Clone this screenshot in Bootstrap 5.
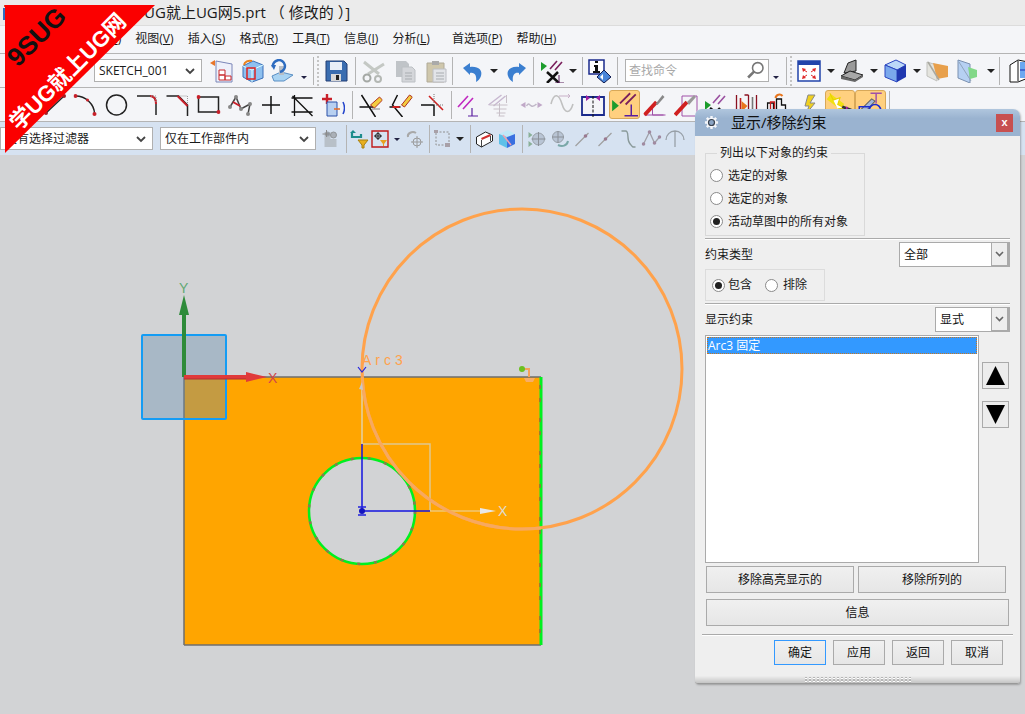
<!DOCTYPE html>
<html lang="zh-CN">
<head>
<meta charset="UTF-8">
<title>NX 草图 - 显示/移除约束</title>
<link href="https://cdn.jsdelivr.net/npm/bootstrap@5.3.3/dist/css/bootstrap.min.css" rel="stylesheet">
<style>
body { font-family: "Open Sans", "Noto Sans CJK SC", sans-serif; font-size: 12px; color: #1a1a1a; background: #d2d3d5; }
.app-shell { width: 1025px; height: 714px; overflow: hidden; position: relative; }
.title-bar { height: 26px; background: #ebebeb; border-bottom: 1px solid #dcdcdc; font-size: 15px; line-height: 25px; white-space: nowrap; }
.menu-bar { height: 27px; background: #f4f5f8; padding-left: 32px; line-height: 26px; white-space: nowrap; }
.menu-bar span { margin-right: 11px; }
.menu-bar span.wide { margin-left: 8px; }
.tool-row { height: 34px; background: #f4f5f8; border-top: 1px solid #b4b4b4; white-space: nowrap; }
.tool-row.tinted { background: #d6e2f1; }
.tool-row > svg { flex: none; }
.pad-sketch { padding-left: 94px; }
.pad-curves { padding-left: 40px; }
.tsep { flex: none; width: 1px; margin: 2px 3px; height: 28px; background: #b4b4b4; }
.tgrip { flex: none; width: 3px; height: 30px; border-left: 2px dotted #c4c4c4; }
.tactive { flex: none; background: #ffd07f; border: 1px solid #d8a858; border-radius: 3px; height: 29px; }
.tsel.form-select { flex: none; height: 23px; min-height: 0; padding: 0 0 0 4px; font-size: 12px; line-height: 21px; border: 1px solid #b0b0b0; border-radius: 0; color: #1a1a1a; background-size: 12px 12px; background-position: right 5px center; background-image: url("data:image/svg+xml,%3csvg xmlns='http://www.w3.org/2000/svg' viewBox='0 0 12 12'%3e%3cpath d='M2 4l4 4 4-4' fill='none' stroke='%23444' stroke-width='1.8'/%3e%3c/svg%3e"); box-shadow: none; }
.sel-sketch { width: 108px; }
.sel-filter { width: 153px; }
.sel-scope { width: 156px; margin-left: 7px; }
.find-box { flex: none; width: 144px; height: 23px; margin-left: 4px; border: 1px solid #b0b0b0; background: #fff; color: #a8a8a8; padding-left: 3px; line-height: 21px; }
.viewport { flex: 1 1 auto; background: #d2d3d5; }
.viewport svg { display: block; }
.corner-flag { position: absolute; left: 0; top: 0; }
.dlg-win { position: absolute; left: 695px; top: 109px; width: 325px; background: #efefef; border-radius: 7px 7px 3px 3px; box-shadow: 1px 1px 2px rgba(0,0,0,.25); }
.dlg-head { height: 27px; border-radius: 7px 7px 0 0; background: linear-gradient(#b0c6de, #9ab3d0 35%); font-size: 15px; color: #111; padding-left: 9px; }
.dlg-close { width: 17px; height: 18px; margin-right: 7px; background: #c75050; color: #fff; font: bold 11px/17px "Liberation Sans", sans-serif; text-align: center; }
.dlg-body { padding: 9px 10px 11px; }
.dlg-group { width: 160px; border: 1px solid #d9d9d9; padding: 3px 0 2px 4px; }
.dlg-group legend { float: none; width: auto; font-size: 12px; line-height: 16px; margin: 0 0 0 7px; padding: 0 3px; }
.radio-row { height: 23px; display: flex; align-items: center; gap: 5px; }
.radio-row .form-check-input, .inline-radios .form-check-input { width: 13px; height: 13px; margin: 0; flex: none; border: 1px solid #8a8a8a; }
.form-check-input:checked { background-color: #fff; border-color: #8a8a8a; background-image: url("data:image/svg+xml,%3csvg xmlns='http://www.w3.org/2000/svg' viewBox='0 0 13 13'%3e%3ccircle cx='6.5' cy='6.5' r='3.5' fill='%23222'/%3e%3c/svg%3e"); background-size: 13px 13px; }
.dlg-rule { height: 2px; margin-top: 2px; background: #aaa; border-bottom: 1px solid #fff; }
.dlg-rule.wide-rule { margin: 8px -3px 0; }
.sel-row { margin-top: 2px; }
.dlg-sel.form-select { height: 25px; min-height: 0; padding: 0 0 0 4px; font-size: 12px; line-height: 23px; color: #111; border: 1px solid #aaa; border-radius: 0; box-shadow: none; background-size: 18px 25px; background-position: right center; background-image: url("data:image/svg+xml,%3csvg xmlns='http://www.w3.org/2000/svg' viewBox='0 0 18 25'%3e%3crect x='0' y='0' width='18' height='25' fill='%23aaa'/%3e%3crect x='1' y='1' width='15' height='22' fill='%23eee'/%3e%3cpath d='M5 10l3.500 3.500L12 10' fill='none' stroke='%23666' stroke-width='1.600'/%3e%3c/svg%3e"); }
.sel-all { width: 111px; }
.sel-mode { width: 75px; }
.inline-group { width: 120px; height: 32px; margin-top: 2px; border: 1px solid #dcdcdc; padding-left: 6px; gap: 6px; }
.inline-radios { display: flex; align-items: center; gap: 3px; }
.inline-radios + .inline-radios { margin-left: 7px; gap: 5px; }
.list-row { margin-top: 3px; }
.cons-list { width: 274px; height: 228px; background: #fff; border: 1px solid #aaa; padding: 1px; border-radius: 0; }
.cons-list .list-group-item { padding: 0; height: 17px; line-height: 15px; font-size: 12px; border: 1px dotted #c8761f; border-radius: 0; background: #3399ff; color: #fff; }
.move-btn.btn { width: 27px; height: 27px; padding: 0; margin-left: 3px; border: 1px solid #aaa; border-radius: 0; background: #ececec; line-height: 0; }
.move-btn.first-move { margin-top: 27px; margin-bottom: 12px; }
.dlg-btn.btn { height: 27px; padding: 0; border: 1px solid #aaa; border-radius: 0; font-size: 12px; color: #111; background: linear-gradient(#f0f0f0, #e6e6e6); }
.half-btn { width: 148px; }
.half-row { margin-top: 3px; margin-left: 1px; gap: 4px; }
.full-btn.btn { display: block; width: 303px; margin: 6px 0 0 1px; }
.foot-row { margin-top: 4px; padding-right: 7px; gap: 7px; }
.foot-btn.btn { width: 52px; height: 25px; }
.foot-btn.is-default.btn { border-color: #3399ff; }
.dlg-grip { height: 8px; border-radius: 0 0 3px 3px; background: linear-gradient(#eee, #c4c4c4); border-bottom: 1px solid #999; }
.grip-dots { width: 108px; height: 6px; background-image: radial-gradient(circle, #fff 0, #fff .6px, #aaa 1.2px, transparent 1.4px); background-size: 4px 3px; }
.mnem { text-decoration: underline; }
</style>
</head>
<body>

<!-- shared toolbar icons -->
<svg class="d-none" xmlns="http://www.w3.org/2000/svg">
  <symbol id="dd" overflow="visible"><path d="M-4-2h8l-4 4z" fill="#222"/></symbol>
  <symbol id="ddb" overflow="visible"><path d="M-3-1h6l-3 3z" fill="#224"/></symbol>

  <symbol id="a1" viewBox="0 0 24 24"><path d="M7 2l16 3v18H7z" fill="#eef0fa" stroke="#7b86b8"/><path d="M10 11h6v5h-6zM10 16h6v5h-6zM16 17h6v4h-6z" fill="#fff" stroke="#c8282c"/><path d="M1 4l5-3v6z" fill="#e8762a"/></symbol>
  <symbol id="a2" viewBox="0 0 24 24"><path d="M2 7l10-5 10 4v13l-11 4-9-5z" fill="#8ec0ef" stroke="#3a6fb8"/><path d="M2 7l9 4 11-5M11 11v12" fill="none" stroke="#dff" /><path d="M6 9h8v11H6z" fill="none" stroke="#d22" stroke-width="1.500"/><path d="M3 6a6 5 0 0 1 8-4" fill="none" stroke="#e8821e" stroke-width="2"/></symbol>
  <symbol id="a3" viewBox="0 0 24 24"><path d="M2 17l9-4 12 3-9 6H4z" fill="#a9d3f2" stroke="#5a8fc4"/><path d="M9 7h5v9H9z" fill="#b8bec6"/><path d="M3 8a6 6 0 1 1 7 5" fill="none" stroke="#2e6cc0" stroke-width="2.500"/><path d="M1 6l5 0-2 5z" fill="#2e6cc0"/></symbol>
  <symbol id="save" viewBox="0 0 24 24"><path d="M2 2h18l3 3v17H2z" fill="#3a6db0" stroke="#223e74"/><path d="M6 3h12v8H6z" fill="#e8eef8"/><path d="M7 15h10v7H7z" fill="#d8d8d8"/><path d="M12 16h3v5h-3z" fill="#222"/></symbol>
  <symbol id="cut" viewBox="0 0 24 24"><path d="M3 3l15 12M23 5L7 15" stroke="#c4c8c4" stroke-width="3" fill="none"/><circle cx="6" cy="19" r="3.500" fill="none" stroke="#a4a8a4" stroke-width="2"/><circle cx="17" cy="20" r="3" fill="none" stroke="#b4b8b4" stroke-width="2"/></symbol>
  <symbol id="copy" viewBox="0 0 24 24"><path d="M3 2h10l3 3v13H3z" fill="#c0c4c8"/><path d="M9 8h10l3 3v12H9z" fill="#d4d6da" stroke="#bcc0c4"/><path d="M12 14h7M12 17h7M12 20h7" stroke="#a8acb0"/></symbol>
  <symbol id="paste" viewBox="0 0 24 24"><path d="M3 4h17v19H3z" fill="#cfc7ac" stroke="#b0aa98"/><path d="M8 2h7v4H8z" fill="#aaa"/><path d="M9 10h13v13H9z" fill="#e2e4e8" stroke="#bcbec4"/><path d="M12 14h8M12 17h8M12 20h8" stroke="#a8acb0"/></symbol>
  <symbol id="undo" viewBox="0 0 24 24"><path d="M3 9l7-5v4c8-1 13 3 11 9-1 3-3 5-5 6 1-6-1-10-6-9v2z" fill="#3b7fd0"/></symbol>
  <symbol id="redo" viewBox="0 0 24 24"><path d="M23 9l-7-5v4C8 7 3 11 5 17c1 3 3 5 5 6-1-6 1-10 6-9v2z" fill="#3b7fd0"/></symbol>
  <symbol id="scn" viewBox="0 0 24 24"><path d="M1 3l6 4-6 5z" fill="#1c9c2c"/><path d="M10 10l7-8M15 11l7-8" stroke="#7a1f5c" stroke-width="1.600"/><path d="M7 13l12 11M18 13L7 24" stroke="#111" stroke-width="2.500"/><path d="M15 24h9M19 16v8" stroke="#5a1f5c"/></symbol>
  <symbol id="info" viewBox="0 0 24 24"><path d="M1 1h15v14H1z" fill="#fff" stroke="#1a2a8c" stroke-width="1.500"/><path d="M7 2h3v2H7zM6 6h4v6h2v2H5v-2h2V8H6z" fill="#111"/><path d="M16 11l7 7-7 6-7-6z" fill="#4a86d8" stroke="#101a50"/><path d="M15 15l-3 3 3 3z" fill="#fff"/></symbol>
  <symbol id="fit" viewBox="0 0 24 24"><path d="M1 2h22v20H1z" fill="#fff" stroke="#2244aa" stroke-width="1.500"/><path d="M1 2h22v4H1z" fill="#2244aa"/><path d="M5 9l4 1-3 3zM19 9l-4 1 3 3zM5 20l4-1-3-3zM19 20l-4-1 3-3z" fill="#e02828"/><path d="M7 11l3 2M17 11l-3 2M7 18l3-2M17 18l-3-2" stroke="#e02828"/></symbol>
  <symbol id="shade" viewBox="0 0 24 24"><path d="M8 4l8-3v11l-12 2z" fill="#9a9a9a" stroke="#222"/><path d="M1 17l9-5 13 4-8 5z" fill="#a8a8a8" stroke="#222"/><path d="M1 17v3l14 3 8-5v-2l-8 5z" fill="#666"/></symbol>
  <symbol id="cube" viewBox="0 0 24 24"><path d="M2 6l11-5 10 5-9 5z" fill="#bcd8f8" stroke="#2a44c0"/><path d="M2 6l12 5v12L2 18z" fill="#7aa8ec" stroke="#2a44c0"/><path d="M14 11l9-5v12l-9 5z" fill="#2038b0"/></symbol>
  <symbol id="orng" viewBox="0 0 24 24"><path d="M2 3l10 3v16L2 17z" fill="#e4e4de" stroke="#c0c0bc"/><path d="M8 4l15 3v11l-11 2z" fill="#e8a04c"/><path d="M3 3l11 18" stroke="#a8a8a0" stroke-width="1.500"/></symbol>
  <symbol id="sect" viewBox="0 0 24 24"><path d="M2 1l12 4v19L2 19z" fill="#b6d0f2" stroke="#7a90b0"/><path d="M12 8l9 3v7l-7 2z" fill="#82d888"/><path d="M3 3l12 19" stroke="#90a4bc"/></symbol>
  <symbol id="cube2" viewBox="0 0 24 24"><path d="M4 6l8-5 10 2v16l-10 4H4z" fill="#fff" stroke="#111"/><path d="M12 2v20" stroke="#111"/><path d="M14 3h8v16h-8z" fill="#6ca8f0"/><path d="M14 11h10M22 8v6" stroke="#1a2ab0"/></symbol>
  <symbol id="look" viewBox="0 0 24 24"><circle cx="14" cy="9" r="6" fill="#fff" stroke="#777" stroke-width="1.800"/><path d="M10 13l-7 7" stroke="#777" stroke-width="3"/></symbol>

  <symbol id="lin" viewBox="0 0 24 24"><path d="M3 20L21 3" stroke="#222" stroke-width="1.500"/><circle cx="3" cy="20" r="2" fill="#a02028"/><circle cx="21" cy="3" r="2" fill="#a02028"/></symbol>
  <symbol id="arc" viewBox="0 0 24 24"><path d="M2 3c10 0 19 8 19 18" fill="none" stroke="#222" stroke-width="1.500"/><circle cx="2" cy="3" r="2" fill="#c8202a"/><circle cx="21" cy="21" r="2" fill="#c8202a"/><circle cx="14" cy="7" r="1.500" fill="#c8202a"/></symbol>
  <symbol id="circ" viewBox="0 0 24 24"><circle cx="12" cy="12" r="10" fill="none" stroke="#222" stroke-width="1.500"/></symbol>
  <symbol id="fil" viewBox="0 0 24 24"><path d="M2 3h13c5 0 6 4 6 8v11" fill="none" stroke="#222" stroke-width="1.500"/><path d="M15 3c5 0 6 4 6 8" fill="none" stroke="#c8202a" stroke-width="2"/><path d="M16 3h5v7" fill="none" stroke="#999" stroke-dasharray="1 1"/></symbol>
  <symbol id="chm" viewBox="0 0 24 24"><path d="M1 3h12l9 9v11" fill="none" stroke="#222" stroke-width="1.500"/><path d="M12 3l10 10" stroke="#c8202a" stroke-width="2"/><path d="M14 3h8v8" fill="none" stroke="#999" stroke-dasharray="1 1"/></symbol>
  <symbol id="rct" viewBox="0 0 24 24"><path d="M2 4h20v15H2z" fill="none" stroke="#222" stroke-width="1.500"/><circle cx="2" cy="4" r="2" fill="#c8202a"/><circle cx="22" cy="19" r="2" fill="#c8202a"/></symbol>
  <symbol id="pol" viewBox="0 0 24 24"><path d="M2 14L8 4l5 12 9-5-2 10" fill="none" stroke="#444" stroke-width="1.500"/><circle cx="2" cy="14" r="2" fill="#888"/><circle cx="8" cy="4" r="2" fill="#888"/><circle cx="13" cy="16" r="2" fill="#888"/><circle cx="22" cy="11" r="2" fill="#888"/><circle cx="20" cy="21" r="2" fill="#888"/><path d="M5 9l7 4" stroke="#c8202a" stroke-width="2"/></symbol>
  <symbol id="pls" viewBox="0 0 24 24"><path d="M3 12h18M12 3v18" stroke="#111" stroke-width="1.500"/></symbol>
  <symbol id="trm" viewBox="0 0 24 24"><path d="M2 5h21M2 19h21M5 2v21M3 3l20 20" stroke="#111" stroke-width="1.300" fill="none"/></symbol>
  <symbol id="ins" viewBox="0 0 24 24"><path d="M6 1v10M1 6h10" stroke="#c8202a" stroke-width="2.400"/><path d="M6 9h10v14H6z" fill="#b8d0f0" stroke="#2a50a8"/><path d="M13 16h6" stroke="#e86820" stroke-width="1.500"/><path d="M22 9c2 4 2 8 0 12" fill="none" stroke="#2244cc" stroke-width="1.500"/></symbol>
  <symbol id="q1" viewBox="0 0 24 24"><path d="M3 2l14 22M1 14h14" stroke="#111" stroke-width="1.500"/><path d="M12 12l9-8 3 3-8 8z" fill="#f2cc40" stroke="#b03020"/><path d="M14 16h8" stroke="#111" stroke-dasharray="1 1"/></symbol>
  <symbol id="q2" viewBox="0 0 24 24"><path d="M9 2L4 12l10 12M1 14h11" stroke="#111" stroke-width="1.500" fill="none"/><path d="M4 14h7" stroke="#d02020" stroke-width="2"/><path d="M13 12l8-10 3 2-8 10z" fill="#f2cc40" stroke="#b03020"/></symbol>
  <symbol id="q3" viewBox="0 0 24 24"><path d="M1 12h13M14 12v11" stroke="#111" stroke-width="1.500"/><path d="M9 3l14 14" stroke="#d02020" stroke-width="1.600"/><path d="M14 1v11M14 12h9" stroke="#777" stroke-dasharray="1 1"/></symbol>
  <symbol id="r1" viewBox="0 0 24 24"><path d="M1 14L11 3M6 16L16 5" stroke="#c028c0" stroke-width="1.600"/><path d="M11 23h10M15 15v8" stroke="#5a1fa0" stroke-width="1.200"/></symbol>
  <symbol id="r2" viewBox="0 0 24 24"><path d="M1 12L14 2M6 13L18 3" stroke="#c8b8d0" stroke-width="1.500"/><path d="M2 12h18M6 16h13M9 20h9M11 23h6M12 10v13M19 2v8" stroke="#c8c0c8"/></symbol>
  <symbol id="r3" viewBox="0 0 24 24"><path d="M1 12l5-3v6zM23 12l-5-3v6z" fill="#c0a8c8"/><path d="M7 13c2-4 3-1 5 0s3 0 5-2" fill="none" stroke="#c0b8c8" stroke-width="1.500"/></symbol>
  <symbol id="r4" viewBox="0 0 24 24"><path d="M1 11c3-12 8-10 11 0s8 10 11 0" fill="none" stroke="#c0c0c0" stroke-width="1.600"/><path d="M9 3h11l-2-2M20 3l-2 2" fill="none" stroke="#c8b0c8"/></symbol>
  <symbol id="r5" viewBox="0 0 24 24"><path d="M1 3v20M23 3v20M1 4h22M1 22h22" stroke="#1a2a8c" stroke-width="1.800" fill="none"/><path d="M12 3v21" stroke="#111" stroke-dasharray="3 1.500"/><path d="M5 2l4 3-4 3zM19 2l-4 3 4 3z" fill="#a020a0"/></symbol>
  <symbol id="r6" viewBox="0 0 24 24"><path d="M1 8l6 5-6 5z" fill="#1c9c2c"/><path d="M8 11l9-9M13 12l9-9" stroke="#7a1f5c" stroke-width="1.600"/><path d="M12 22h12M18 12v10" stroke="#5a1fa0" stroke-width="1.300"/></symbol>
  <symbol id="r7" viewBox="0 0 24 24"><path d="M1 22h21M9 12v10h11" fill="none" stroke="#a050a8"/><path d="M1 22l12-13" stroke="#d02020" stroke-width="4"/><path d="M12 11l7-9 2 2-7 8" fill="#888"/></symbol>
  <symbol id="r8" viewBox="0 0 24 24"><path d="M8 3h15v20H8z" fill="none" stroke="#a050a8"/><path d="M1 22l12-13" stroke="#d02020" stroke-width="4"/><path d="M13 9l7-7 2 2-7 8" fill="#999"/></symbol>
  <symbol id="r9" viewBox="0 0 24 24"><path d="M1 8l6 4-6 5z" fill="#1c9c2c"/><path d="M9 10l7-8M14 11l7-8" stroke="#9a50a0" stroke-width="1.600"/><path d="M6 15l10 8M16 15L8 23" stroke="#111" stroke-width="2.400"/></symbol>
  <symbol id="r10" viewBox="0 0 24 24"><path d="M2 2v21M10 2h4M22 2v21M14 2v21" stroke="#8a1020" stroke-width="1.300"/><path d="M6 5v15" stroke="#c02020" stroke-width="1.600"/><path d="M7 8l6 5-6 6z" fill="#e8761e"/><path d="M18 4v16" stroke="#777" stroke-width="1.600"/></symbol>
  <symbol id="r11" viewBox="0 0 24 24"><path d="M1 22V10h6v12h3V6h5v6h4v10h3" fill="none" stroke="#111" stroke-width="1.300"/><path d="M4 9h4v12H4z" fill="none" stroke="#d02020" stroke-width="1.300"/><path d="M9 5a4 4 0 0 1 7-2" fill="none" stroke="#e8761e" stroke-width="2"/></symbol>
  <symbol id="r12" viewBox="0 0 24 24"><path d="M10 2h7l-5 8h5l-9 11 3-8H7z" fill="#f0d020" stroke="#888"/><path d="M2 23h18" stroke="#a020a0" stroke-width="1.500"/></symbol>
  <symbol id="r13" viewBox="0 0 24 24"><path d="M2 5l12 9" stroke="#f2e010" stroke-width="6"/><path d="M3 2l3 6 6-2-2 6 6 3-6 1" fill="#fff" stroke="#e8d000"/><path d="M14 14l8 3" stroke="#333" stroke-width="2.500"/><path d="M11 23h13M18 14v9" stroke="#b018b0" stroke-width="1.500"/></symbol>
  <symbol id="r14" viewBox="0 0 24 24"><path d="M12 2h10M17 2v9M8 23h15" stroke="#a050a8" stroke-width="1.300"/><path d="M3 17l10-10 3 2-9 10z" fill="#a4b8d8" stroke="#666"/><circle cx="16" cy="17" r="5" fill="none" stroke="#1a2ad0" stroke-width="1.400"/><path d="M2 22v-8h10" fill="none" stroke="#1a2ad0" stroke-width="1.300"/></symbol>

  <symbol id="s1" viewBox="0 0 20 20"><path d="M5 3h6v7h6v8H5z" fill="#b8c0c8"/><circle cx="8" cy="5" r="2.500" fill="#98a0a8"/><circle cx="14" cy="6" r="3" fill="#aab0b8" stroke="#909498"/><path d="M3 5h7M7 1v7" stroke="#8a8a8a"/></symbol>
  <symbol id="s2" viewBox="0 0 20 20"><path d="M2 4v4h9V5" fill="none" stroke="#1c8c8c" stroke-width="2.200"/><path d="M0 4l3-3 3 3z" fill="#1c8c8c"/><path d="M8 11h10l-4 5v3h-2v-3z" fill="#e8b020" stroke="#a88010"/></symbol>
  <symbol id="s3" viewBox="0 0 20 20"><path d="M2 2h16v16H2z" fill="none" stroke="#c01818" stroke-width="1.400"/><circle cx="8" cy="7" r="2.500" fill="none" stroke="#222"/><path d="M8 3v8M4 7h8" stroke="#222"/><path d="M10 11h7l-3 4v2h-1v-2z" fill="#e8a020"/></symbol>
  <symbol id="s4" viewBox="0 0 20 20"><path d="M3 8a5 4 0 0 1 8-4" fill="none" stroke="#a8a8a8" stroke-width="2"/><circle cx="12" cy="13" r="4" fill="none" stroke="#9a9a9a"/><path d="M12 7v12M6 13h12" stroke="#9a9a9a"/></symbol>
  <symbol id="s5" viewBox="0 0 20 20"><path d="M3 3h13v13H3z" fill="none" stroke="#909090" stroke-dasharray="2 1.500"/><path d="M1 1h4v3H1zM12 14h5v4h-5z" fill="#a8a0a8"/></symbol>
  <symbol id="s6" viewBox="0 0 20 20"><path d="M2 8l9-5 7 3v6l-11 6-5-3z" fill="#fff" stroke="#222"/><path d="M7 10l9-4" stroke="#d03030" stroke-width="2"/><path d="M7 11v7M16 7v5" stroke="#444"/></symbol>
  <symbol id="s7" viewBox="0 0 20 20"><path d="M2 5l9-4 7 4-8 3z" fill="#bfe8f8"/><path d="M2 5l8 3v11L2 15z" fill="#5ec0e8"/><path d="M10 8l8-3v10l-8 4z" fill="#3a70e0"/><path d="M6 6l8 10" stroke="#f0a0b0" stroke-width="1.500"/></symbol>
  <symbol id="s8" viewBox="0 0 20 20"><circle cx="11" cy="10" r="6" fill="#b8c4d4" stroke="#98a0a8"/><path d="M11 3v14M4 10h14" stroke="#8a9098"/><path d="M1 3l4 3-4 3zM1 12l4 3-4 3z" fill="#8ab098"/></symbol>
  <symbol id="s9" viewBox="0 0 20 20"><circle cx="8" cy="8" r="5.500" fill="#b8c4d4" stroke="#98a0a8"/><path d="M8 2v12M2 8h12" stroke="#8a9098"/><path d="M8 16c4 2 9 1 10-4" fill="none" stroke="#7aa8a8" stroke-width="2"/></symbol>
  <symbol id="s10" viewBox="0 0 20 20"><path d="M3 17L16 4" stroke="#a0a0a0" stroke-width="1.200"/><circle cx="13" cy="7" r="1.800" fill="#9a7a90"/></symbol>
  <symbol id="s11" viewBox="0 0 20 20"><path d="M3 17L16 4" stroke="#a0a0a0" stroke-width="1.200"/><circle cx="10" cy="10" r="1.800" fill="#9a7a90"/></symbol>
  <symbol id="s12" viewBox="0 0 20 20"><path d="M3 2h4c4 0 1 8 4 12s2 4 6 4" fill="none" stroke="#8a9a9a" stroke-width="1.400"/></symbol>
  <symbol id="s13" viewBox="0 0 20 20"><path d="M2 15L8 3l5 11 5-6" fill="none" stroke="#a0a0a8" stroke-width="1.300"/><circle cx="2" cy="15" r="1.800" fill="#a08aa0"/><circle cx="8" cy="3" r="1.800" fill="#a08aa0"/><circle cx="13" cy="14" r="1.800" fill="#a08aa0"/><circle cx="18" cy="8" r="1.800" fill="#a08aa0"/></symbol>
  <symbol id="s14" viewBox="0 0 20 20"><path d="M1 11a9 9 0 0 1 18 0M10 2v16" fill="none" stroke="#98a0a8" stroke-width="1.300"/></symbol>
</svg>

<div class="app-shell d-flex flex-column">

  <div class="title-bar d-flex align-items-center">
    <svg width="24" height="25" viewBox="0 0 24 25"><path d="M3 8h6v12H3z" fill="#2e6cc0"/><path d="M4 6h6" stroke="#d84a2a" stroke-width="2"/></svg>
    <span>NX 8.5 - 草图 - [学UG就上UG网5.prt （ 修改的 ）]</span>
  </div>

  <div class="menu-bar">
    <span>文件(<span class="mnem m-0">F</span>)</span>
    <span>编辑(<span class="mnem m-0">E</span>)</span>
    <span>视图(<span class="mnem m-0">V</span>)</span>
    <span>插入(<span class="mnem m-0">S</span>)</span>
    <span>格式(<span class="mnem m-0">R</span>)</span>
    <span>工具(<span class="mnem m-0">T</span>)</span>
    <span>信息(<span class="mnem m-0">I</span>)</span>
    <span>分析(<span class="mnem m-0">L</span>)</span>
    <span class="wide">首选项(<span class="mnem m-0">P</span>)</span>
    <span>帮助(<span class="mnem m-0">H</span>)</span>
  </div>

  <div class="tool-row d-flex align-items-center pad-sketch">
    <select class="form-select tsel sel-sketch"><option>SKETCH_001</option></select>
    <svg width="38" height="24" viewBox="0 0 24 24"><use href="#a1"/></svg>
    <svg width="26" height="24" viewBox="0 0 24 24"><use href="#a2"/></svg>
    <svg width="32" height="24" viewBox="0 0 24 24"><use href="#a3"/></svg>
    <svg width="12" height="24" viewBox="0 0 12 24"><use href="#ddb" x="6" y="18"/></svg>
    <span class="tsep"></span><span class="tgrip"></span>
    <svg width="32" height="24" viewBox="0 0 24 24"><use href="#save"/></svg>
    <span class="tsep"></span>
    <svg width="28" height="24" viewBox="0 0 24 24"><use href="#cut"/></svg>
    <svg width="36" height="24" viewBox="0 0 24 24"><use href="#copy"/></svg>
    <svg width="26" height="24" viewBox="0 0 24 24"><use href="#paste"/></svg>
    <span class="tsep"></span>
    <svg width="32" height="24" viewBox="0 0 24 24"><use href="#undo"/></svg>
    <svg width="12" height="24" viewBox="0 0 12 24"><use href="#dd" x="6" y="12"/></svg>
    <svg width="30" height="24" viewBox="0 0 24 24"><use href="#redo"/></svg>
    <span class="tsep"></span>
    <svg width="30" height="24" viewBox="0 0 24 24"><use href="#scn"/></svg>
    <svg width="12" height="24" viewBox="0 0 12 24"><use href="#dd" x="6" y="12"/></svg>
    <span class="tsep"></span>
    <svg width="28" height="24" viewBox="0 0 24 24"><use href="#info"/></svg>
    <span class="tsep"></span>
    <div class="find-box d-flex align-items-center justify-content-between">查找命令<svg width="24" height="21" viewBox="0 0 24 24"><use href="#look"/></svg></div>
    <svg width="14" height="24" viewBox="0 0 14 24"><use href="#ddb" x="7" y="18"/></svg>
    <span class="tsep"></span><span class="tgrip"></span>
    <svg width="32" height="24" viewBox="0 0 24 24"><use href="#fit"/></svg>
    <svg width="12" height="24" viewBox="0 0 12 24"><use href="#dd" x="6" y="12"/></svg>
    <svg width="30" height="24" viewBox="0 0 24 24"><use href="#shade"/></svg>
    <svg width="14" height="24" viewBox="0 0 14 24"><use href="#dd" x="7" y="12"/></svg>
    <svg width="28" height="24" viewBox="0 0 24 24"><use href="#cube"/></svg>
    <svg width="16" height="24" viewBox="0 0 16 24"><use href="#dd" x="8" y="12"/></svg>
    <svg width="24" height="24" viewBox="0 0 24 24"><use href="#orng"/></svg>
    <svg width="38" height="24" viewBox="0 0 24 24"><use href="#sect"/></svg>
    <svg width="9" height="24" viewBox="0 0 9 24"><use href="#dd" x="4" y="12"/></svg>
    <span class="tsep"></span>
    <svg width="30" height="24" viewBox="0 0 24 24"><use href="#cube2"/></svg>
  </div>

  <div class="tool-row d-flex align-items-center pad-curves">
    <svg width="30" height="24" viewBox="0 0 24 24"><use href="#lin"/></svg>
    <svg width="31" height="24" viewBox="0 0 24 24"><use href="#arc"/></svg>
    <svg width="31" height="24" viewBox="0 0 24 24"><use href="#circ"/></svg>
    <svg width="30" height="24" viewBox="0 0 24 24"><use href="#fil"/></svg>
    <svg width="31" height="24" viewBox="0 0 24 24"><use href="#chm"/></svg>
    <svg width="31" height="24" viewBox="0 0 24 24"><use href="#rct"/></svg>
    <svg width="32" height="24" viewBox="0 0 24 24"><use href="#pol"/></svg>
    <svg width="30" height="24" viewBox="0 0 24 24"><use href="#pls"/></svg>
    <svg width="31" height="24" viewBox="0 0 24 24"><use href="#trm"/></svg>
    <svg width="32" height="24" viewBox="0 0 24 24"><use href="#ins"/></svg>
    <span class="tsep"></span>
    <svg width="29" height="24" viewBox="0 0 24 24"><use href="#q1"/></svg>
    <svg width="31" height="24" viewBox="0 0 24 24"><use href="#q2"/></svg>
    <svg width="32" height="24" viewBox="0 0 24 24"><use href="#q3"/></svg>
    <span class="tsep"></span>
    <svg width="28" height="24" viewBox="0 0 24 24"><use href="#r1"/></svg>
    <svg width="33" height="24" viewBox="0 0 24 24"><use href="#r2"/></svg>
    <svg width="31" height="24" viewBox="0 0 24 24"><use href="#r3"/></svg>
    <svg width="30" height="24" viewBox="0 0 24 24"><use href="#r4"/></svg>
    <svg width="32" height="24" viewBox="0 0 24 24"><use href="#r5"/></svg>
    <svg class="tactive" width="31" height="29" viewBox="0 0 24 24"><use href="#r6"/></svg>
    <svg width="31" height="24" viewBox="0 0 24 24"><use href="#r7"/></svg>
    <svg width="30" height="24" viewBox="0 0 24 24"><use href="#r8"/></svg>
    <svg width="30" height="24" viewBox="0 0 24 24"><use href="#r9"/></svg>
    <svg width="31" height="24" viewBox="0 0 24 24"><use href="#r10"/></svg>
    <svg width="33" height="24" viewBox="0 0 24 24"><use href="#r11"/></svg>
    <svg width="30" height="24" viewBox="0 0 24 24"><use href="#r12"/></svg>
    <svg class="tactive" width="30" height="29" viewBox="0 0 24 24"><use href="#r13"/></svg>
    <svg class="tactive" width="31" height="29" viewBox="0 0 24 24"><use href="#r14"/></svg>
    <span class="tsep"></span>
  </div>

  <div class="tool-row tinted d-flex align-items-center">
    <select class="form-select tsel sel-filter"><option>没有选择过滤器</option></select>
    <select class="form-select tsel sel-scope"><option>仅在工作部件内</option></select>
    <svg width="27" height="20" viewBox="0 0 20 20"><use href="#s1"/></svg>
    <span class="tsep"></span>
    <svg width="20" height="20" viewBox="0 0 20 20"><use href="#s2"/></svg>
    <svg width="20" height="20" viewBox="0 0 20 20"><use href="#s3"/></svg>
    <svg width="14" height="24" viewBox="0 0 14 24"><use href="#ddb" x="7" y="12"/></svg>
    <svg width="22" height="20" viewBox="0 0 20 20"><use href="#s4"/></svg>
    <span class="tsep"></span>
    <svg width="20" height="20" viewBox="0 0 20 20"><use href="#s5"/></svg>
    <svg width="14" height="24" viewBox="0 0 14 24"><use href="#dd" x="7" y="12"/></svg>
    <span class="tsep"></span>
    <svg width="21" height="20" viewBox="0 0 20 20"><use href="#s6"/></svg>
    <svg width="24" height="20" viewBox="0 0 20 20"><use href="#s7"/></svg>
    <span class="tsep"></span>
    <svg width="23" height="20" viewBox="0 0 20 20"><use href="#s8"/></svg>
    <svg width="22" height="20" viewBox="0 0 20 20"><use href="#s9"/></svg>
    <svg width="23" height="20" viewBox="0 0 20 20"><use href="#s10"/></svg>
    <svg width="23" height="20" viewBox="0 0 20 20"><use href="#s11"/></svg>
    <svg width="23" height="20" viewBox="0 0 20 20"><use href="#s12"/></svg>
    <svg width="23" height="20" viewBox="0 0 20 20"><use href="#s13"/></svg>
    <svg width="24" height="20" viewBox="0 0 20 20"><use href="#s14"/></svg>
  </div>

  <!-- graphics window: coordinates below are page pixels -->
  <div class="viewport">
    <svg width="1025" height="559" viewBox="0 155 1025 559" font-family="Liberation Sans, sans-serif">
      <defs><clipPath id="in-plate"><path d="M184 377h357v268H184z"/></clipPath></defs>
      <path d="M184 377h357v268H184z" fill="#ffa500"/>
      <path d="M184 645V377h357" fill="none" stroke="#6e6e6e" stroke-width="1.500"/>
      <path d="M184 645h357" stroke="#6e6e6e" stroke-width="1.500"/>
      <path d="M541 377v268" stroke="#00f020" stroke-width="3"/>
      <path d="M540 385v258" stroke="#a0683a" stroke-width="1.500" stroke-dasharray="4 9 4 16"/>
      <circle cx="362" cy="511" r="53" fill="#d2d3d5" stroke="#00f020" stroke-width="2.500"/>
      <circle cx="362" cy="511" r="53" fill="none" stroke="#8a7a50" stroke-width="2.500" stroke-dasharray="3 14"/>

      <path d="M362 377v67" stroke="#dcdcd0" stroke-width="1.200"/>
      <path d="M362 444h68v67" fill="none" stroke="#e0c890" stroke-width="1.500"/>
      <path d="M362 444v67h68" fill="none" stroke="#1414e0" stroke-width="1.500"/>
      <path d="M430 511h52" stroke="#e8d8b0" stroke-width="1.200"/>
      <path d="M480 508l16 3-16 3z" fill="#e8e8e8"/>
      <text x="498" y="516" font-size="14" fill="#e0dcd0">X</text>
      <path d="M358 507h8M358 515h8" stroke="#2222dd" stroke-width="1.500"/><circle cx="362" cy="511" r="3" fill="#1414c0"/>

      <circle cx="522" cy="369" r="160" fill="none" stroke="#ffa24c" stroke-width="3"/>
      <circle cx="522" cy="369" r="160" fill="none" stroke="#f7a960" stroke-width="3" clip-path="url(#in-plate)"/>
      <path d="M362 382l-3 7 4 1z" fill="#c8c8c8"/>
      <path d="M358 367l4 5 4-5" fill="none" stroke="#2222dd" stroke-width="1.200"/>
      <text x="362" y="365" font-size="14" letter-spacing="4" fill="#ffa24c">Arc3</text>
      <path d="M524 369h5v8" fill="none" stroke="#f5a25a" stroke-width="2"/>
      <path d="M524 378h11l-2 4h-7z" fill="#f7ad68"/>
      <circle cx="522" cy="369" r="3" fill="#6cc020"/>

      <rect x="142" y="335" width="84" height="84" rx="1" fill="#648bae" fill-opacity=".38" stroke="#149cf4" stroke-width="2"/>
      <path d="M184 377v-65" stroke="#2e8b3a" stroke-width="4"/>
      <path d="M184 295l5 20h-10z" fill="#2e8b3a"/>
      <text x="179" y="293" font-size="14" fill="#62a874">Y</text>
      <path d="M184 377h66" stroke="#e03a3a" stroke-width="4"/>
      <path d="M184 379h66" stroke="#b03030" stroke-width="1"/>
      <path d="M246 372l21 5-21 5z" fill="#e03a3a"/>
      <text x="268" y="383" font-size="14" fill="#d04848">X</text>
    </svg>
  </div>

  <!-- watermark ribbon over the window corner -->
  <svg class="corner-flag" width="160" height="160" viewBox="0 0 160 160">
    <path d="M5 5h150L5 153z" fill="#fb0000"/>
    <text transform="translate(38 38) rotate(-45)" text-anchor="middle" dominant-baseline="middle" font-family="Liberation Sans, sans-serif" font-weight="700" font-size="26" fill="#111">9SUG</text>
    <text transform="translate(69 73) rotate(-45)" text-anchor="middle" dominant-baseline="middle" font-family="Liberation Sans, Noto Sans CJK SC, sans-serif" font-weight="700" font-size="22" fill="#fff">学UG就上UG网</text>
  </svg>

  <!-- 显示/移除约束 dialog -->
  <div class="dlg-win">
    <div class="dlg-head d-flex align-items-center">
      <svg width="15" height="15" viewBox="0 0 16 16"><path d="M8 1v14M1 8h14M3 3l10 10M13 3L3 13" stroke="#f4f6fa" stroke-width="2.600"/><circle cx="8" cy="8" r="5.200" fill="#f4f6fa"/><circle cx="8" cy="8" r="3.200" fill="#8aa4c4" stroke="#3c4450" stroke-width="1.300"/></svg>
      <span class="ms-2 ps-1 flex-grow-1">显示/移除约束</span>
      <div class="dlg-close">x</div>
    </div>
    <div class="dlg-body">
      <fieldset class="dlg-group">
        <legend>列出以下对象的约束</legend>
        <div class="radio-row"><input class="form-check-input" type="radio" name="scope"><span>选定的对象</span></div>
        <div class="radio-row"><input class="form-check-input" type="radio" name="scope"><span>选定的对象</span></div>
        <div class="radio-row"><input class="form-check-input" type="radio" name="scope" checked><span>活动草图中的所有对象</span></div>
      </fieldset>
      <div class="dlg-rule"></div>
      <div class="d-flex align-items-center justify-content-between sel-row">
        <span>约束类型</span>
        <select class="form-select dlg-sel sel-all"><option>全部</option></select>
      </div>
      <div class="inline-group d-flex align-items-center">
        <label class="inline-radios"><input class="form-check-input" type="radio" name="kind" checked><span>包含</span></label>
        <label class="inline-radios"><input class="form-check-input" type="radio" name="kind"><span>排除</span></label>
      </div>
      <div class="dlg-rule"></div>
      <div class="d-flex align-items-center justify-content-between sel-row">
        <span>显示约束</span>
        <select class="form-select dlg-sel sel-mode"><option>显式</option></select>
      </div>
      <div class="d-flex list-row">
        <ul class="list-group cons-list"><li class="list-group-item">Arc3 固定</li></ul>
        <div>
          <button type="button" class="btn move-btn first-move d-block"><svg width="25" height="25" viewBox="0 0 25 25"><path d="M12.500 3l9.500 19H3z" fill="#000"/></svg></button>
          <button type="button" class="btn move-btn d-block"><svg width="25" height="25" viewBox="0 0 25 25"><path d="M12.500 22L3 3h19z" fill="#000"/></svg></button>
        </div>
      </div>
      <div class="d-flex half-row">
        <button type="button" class="btn dlg-btn half-btn">移除高亮显示的</button>
        <button type="button" class="btn dlg-btn half-btn">移除所列的</button>
      </div>
      <button type="button" class="btn dlg-btn full-btn">信息</button>
      <div class="dlg-rule wide-rule"></div>
      <div class="d-flex justify-content-end foot-row">
        <button type="button" class="btn dlg-btn foot-btn is-default">确定</button>
        <button type="button" class="btn dlg-btn foot-btn">应用</button>
        <button type="button" class="btn dlg-btn foot-btn">返回</button>
        <button type="button" class="btn dlg-btn foot-btn">取消</button>
      </div>
    </div>
    <div class="dlg-grip d-flex justify-content-center align-items-center"><div class="grip-dots"></div></div>
  </div>

</div>

<script src="https://cdn.jsdelivr.net/npm/bootstrap@5.3.3/dist/js/bootstrap.bundle.min.js"></script>
</body>
</html>
